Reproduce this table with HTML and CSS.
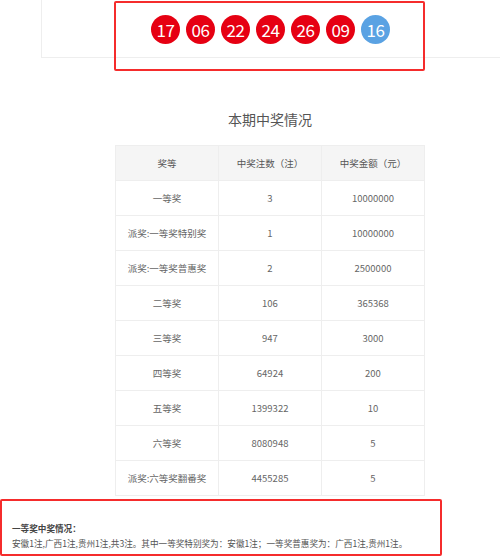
FILE: index.html
```html
<!DOCTYPE html>
<html>
<head>
<meta charset="utf-8">
<link rel="stylesheet" href="styles.css">
</head>
<body>
<div class="top">
  <div class="top-card">
    <div class="balls">
      <span class="ball red">17</span>
      <span class="ball red">06</span>
      <span class="ball red">22</span>
      <span class="ball red">24</span>
      <span class="ball red">26</span>
      <span class="ball red">09</span>
      <span class="ball blue">16</span>
    </div>
  </div>
  <div class="mark mark-top"></div>
</div>
<div class="main">
  <h2 class="title">本期中奖情况</h2>
  <table class="prize">
    <thead>
      <tr><th>奖等</th><th>中奖注数（注）</th><th>中奖金额（元）</th></tr>
    </thead>
    <tbody>
      <tr><td>一等奖</td><td>3</td><td>10000000</td></tr>
      <tr><td>派奖:一等奖特别奖</td><td>1</td><td>10000000</td></tr>
      <tr><td>派奖:一等奖普惠奖</td><td>2</td><td>2500000</td></tr>
      <tr><td>二等奖</td><td>106</td><td>365368</td></tr>
      <tr><td>三等奖</td><td>947</td><td>3000</td></tr>
      <tr><td>四等奖</td><td>64924</td><td>200</td></tr>
      <tr><td>五等奖</td><td>1399322</td><td>10</td></tr>
      <tr><td>六等奖</td><td>8080948</td><td>5</td></tr>
      <tr><td>派奖:六等奖翻番奖</td><td>4455285</td><td>5</td></tr>
    </tbody>
  </table>
</div>
<div class="notes">
  <p class="notes-title">一等奖中奖情况：</p>
  <p class="notes-text">安徽1注,广西1注,贵州1注,共3注。其中一等奖特别奖为：安徽1注；一等奖普惠奖为：广西1注,贵州1注。</p>
</div>
</body>
</html>
```

FILE: styles.css
```css
html, body {
  margin: 0;
  padding: 0;
  background: #fff;
}
body {
  font-family: "Noto Sans CJK SC", "Noto Sans", sans-serif;
  color: #666;
  width: 500px;
  height: 557px;
  overflow: hidden;
}
.top {
  position: relative;
  height: 59px;
}
.top-card {
  margin-left: 41px;
  height: 58px;
  border-left: 1px solid #eee;
  border-bottom: 1px solid #eee;
  display: flex;
  align-items: flex-start;
  justify-content: center;
  padding-right: 1px;
  box-sizing: border-box;
}
.balls {
  display: flex;
  gap: 6px;
  margin-top: 15px;
}
.ball {
  width: 29px;
  height: 29px;
  border-radius: 50%;
  color: #fff;
  font-size: 17px;
  line-height: 29px;
  text-align: center;
  letter-spacing: -0.5px;
}
.ball.red { background: #e60012; }
.ball.blue { background: #5aa2e3; }
.mark {
  position: absolute;
  border: 2px solid #f52c2c;
  border-radius: 2px;
  box-sizing: border-box;
}
.mark-top {
  left: 114px;
  top: 1px;
  width: 311px;
  height: 70px;
}
.main {
  width: 310px;
  margin-left: 115px;
}
.title {
  margin: 48px 0 0;
  height: 38px;
  font-size: 14px;
  line-height: 24px;
  font-weight: normal;
  text-align: center;
  color: #555;
}
.prize {
  width: 310px;
  border-collapse: collapse;
  table-layout: fixed;
  font-size: 9.5px;
  color: #666;
}
.prize th, .prize td {
  height: 34px;
  padding: 0;
  border: 1px solid #eee;
  text-align: center;
  font-weight: normal;
}
.prize th {
  background: #f5f5f5;
  color: #555;
}
.notes {
  margin-top: 3px;
  width: 442px;
  height: 57px;
  border: 2px solid #f52c2c;
  border-radius: 2px;
  box-sizing: border-box;
  padding: 20px 0 0 10px;
  font-size: 8.6px;
  color: #555;
}
.notes p {
  margin: 0;
  line-height: 15px;
  white-space: nowrap;
}
.notes-title {
  font-weight: bold;
  color: #444;
}
```
